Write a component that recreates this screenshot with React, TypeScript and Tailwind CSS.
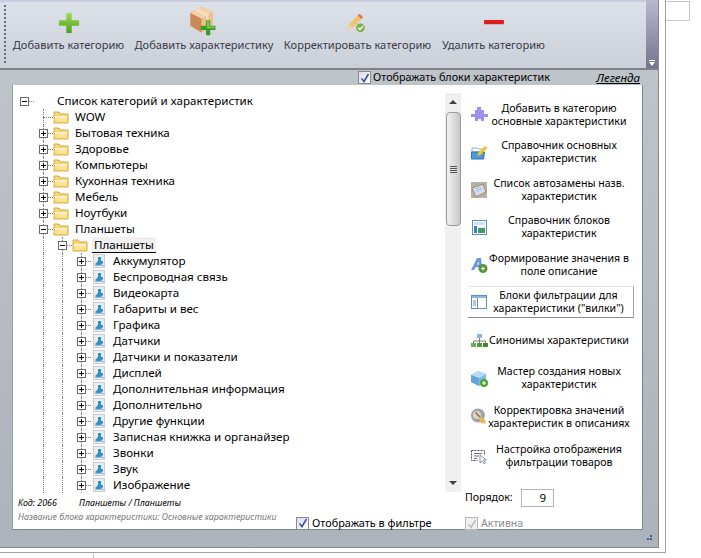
import type { ReactNode } from "react";

const PlusIcon = () => (
  <svg width="22" height="22" viewBox="0 0 24 24">
    <defs>
      <linearGradient id="plusG" x1="0" y1="0" x2="0" y2="1">
        <stop offset="0" stopColor="#9fdc5a" />
        <stop offset="1" stopColor="#4e9f1f" />
      </linearGradient>
    </defs>
    <path d="M9 1h6v8h8v6h-8v8H9v-8H1V9h8z" fill="url(#plusG)" />
  </svg>
);

const MinusIcon = () => (
  <svg width="20" height="7" viewBox="0 0 20 7">
    <rect x="0" y="1" width="20" height="4" rx="1" fill="#e21a1a" />
    <rect x="0" y="5" width="20" height="1" fill="#a8a8a8" opacity="0.6" />
  </svg>
);

const BoxIcon = () => (
  <svg width="29" height="31" viewBox="0 0 32 36">
    <path d="M2 9 15 2l13 6v15l-13 9-13-8z" fill="#e0a873" />
    <path d="M2 9l13 7v16L2 24z" fill="#c98a56" />
    <path d="M15 16l13-8v15l-13 9z" fill="#efc08f" />
    <path d="M2 9 15 2l13 6-13 8z" fill="#f3d2ab" />
    <path d="M7 6l13 7v4l3-2v-4L10 4z" fill="#fbe6c8" opacity="0.7" />
    <path d="M20 18h5v6h6v5h-6v6h-5v-6h-6v-5h6z" fill="#3f9a2b" />
    <path d="M21 19h3v6h6v2h-9z" fill="#79c94f" />
  </svg>
);

const PencilIcon = () => (
  <svg width="20" height="21" viewBox="0 0 22 24">
    <path d="M0 22 3 14 15 2l4 4L7 18z" fill="#efc36a" />
    <path d="M15 2l4 4-2 2-4-4z" fill="#e56c5c" />
    <path d="M0 22l3-8 4 4z" fill="#e9d7b0" />
    <circle cx="16" cy="18" r="5" fill="#7cb342" />
    <path d="M13.5 18l2 2 3.5-4" stroke="#fff" strokeWidth="1.4" fill="none" />
  </svg>
);

const Folder = () => (
  <svg width="16" height="14" viewBox="0 0 16 14" className="shrink-0">
    <path d="M1 2h5l1.5 2H15v9H1z" fill="#f6d675" stroke="#d8ab4a" />
    <rect x="2" y="6" width="12" height="2" fill="#fff3c4" />
    <rect x="2" y="8" width="12" height="4" fill="#fbe392" />
  </svg>
);

const Leaf = () => (
  <svg width="16" height="16" viewBox="0 0 16 16" className="shrink-0">
    <rect x="2" y="1" width="12" height="14" fill="#c9cdd0" />
    <rect x="3" y="2" width="10" height="12" fill="#e9ebec" />
    <path d="M7 4h3v4h2v2l-2 2H5l-1-1 3-3z" fill="#2f93c4" />
    <rect x="4" y="12" width="9" height="1" fill="#9fc0d4" />
  </svg>
);

const Expander = ({ open }: { open?: boolean }) => (
  <span className="relative flex h-[9px] w-[9px] items-center justify-center border border-[#6a6a6a] bg-white">
    <span className="absolute h-px w-[5px] bg-black" />
    {!open && <span className="absolute h-[5px] w-px bg-black" />}
  </span>
);

// один столбец отступа в дереве
const Guide = ({ kind }: { kind: "blank" | "line" | "plus" | "minus" | "corner" | "rootMinus" }) => (
  <span className="relative flex h-4 w-[19px] shrink-0 items-center justify-center">
    {kind !== "rootMinus" && kind !== "blank" && (
      <span className="absolute left-[9px] top-0 h-4 border-l border-dotted border-[#808080]" />
    )}
    {kind !== "line" && kind !== "blank" && (
      <span className="absolute left-[9px] top-[8px] w-[10px] border-t border-dotted border-[#808080]" />
    )}
    {(kind === "plus" || kind === "minus" || kind === "rootMinus") && (
      <Expander open={kind !== "plus"} />
    )}
  </span>
);

const top = [
  ["corner", "WOW"],
  ["plus", "Бытовая техника"],
  ["plus", "Здоровье"],
  ["plus", "Компьютеры"],
  ["plus", "Кухонная техника"],
  ["plus", "Мебель"],
  ["plus", "Ноутбуки"],
  ["minus", "Планшеты"],
] as const;

const leaves = [
  "Аккумулятор",
  "Беспроводная связь",
  "Видеокарта",
  "Габариты и вес",
  "Графика",
  "Датчики",
  "Датчики и показатели",
  "Дисплей",
  "Дополнительная информация",
  "Дополнительно",
  "Другие функции",
  "Записная книжка и органайзер",
  "Звонки",
  "Звук",
  "Изображение",
];

const Tree = () => (
  <div className="flex-1 pl-[2px] pt-2 text-[11.6px] leading-4 text-black">
    <div className="flex h-4 items-center">
      <Guide kind="rootMinus" />
      <span className="ml-[23px]">Список категорий и характеристик</span>
    </div>
    {top.map(([kind, label]) => (
      <div key={label} className="flex h-4 items-center">
        <Guide kind="blank" />
        <Guide kind={kind} />
        <Folder />
        <span className="ml-[6px]">{label}</span>
      </div>
    ))}
    <div className="flex h-4 items-center">
      <Guide kind="blank" />
      <Guide kind="line" />
      <Guide kind="minus" />
      <Folder />
      <span className="ml-[4px] border-b border-black bg-[#f0f0f0] px-[2px] leading-[15px]">Планшеты</span>
    </div>
    {leaves.map((label) => (
      <div key={label} className="flex h-4 items-center">
        <Guide kind="blank" />
        <Guide kind="line" />
        <Guide kind="line" />
        <Guide kind="plus" />
        <Leaf />
        <span className="ml-[6px]">{label}</span>
      </div>
    ))}
  </div>
);

const Scrollbar = () => (
  <div className="mt-2 flex h-[399px] w-4 shrink-0 flex-col items-center bg-[#f0f0f0]">
    <div className="mt-[7px] h-0 w-0 border-x-[4px] border-b-[4px] border-x-transparent border-b-[#404040]" />
    <div className="mt-[8px] flex h-[114px] w-[15px] flex-col items-center justify-center gap-px rounded-sm border border-[#9a9a9a] bg-gradient-to-r from-[#f2f2f2] to-[#c8c8c8]">
      <span className="h-px w-[7px] bg-[#555]" />
      <span className="h-px w-[7px] bg-[#555]" />
      <span className="h-px w-[7px] bg-[#555]" />
      <span className="h-px w-[7px] bg-[#555]" />
    </div>
    <div className="mt-auto mb-[7px] h-0 w-0 border-x-[4px] border-t-[4px] border-x-transparent border-t-[#404040]" />
  </div>
);

const icons: Record<string, ReactNode> = {
  puzzle: (
    <svg width="17" height="15" viewBox="0 0 17 15">
      <path d="M6 0h4v3h3v4h4v3h-4v4h-3v-2H7v2H4v-4H0V7h4V3h2z" fill="#9d90ee" />
    </svg>
  ),
  folder: (
    <svg width="17" height="15" viewBox="0 0 17 15">
      <path d="M1 3h5l1 1h5l-2 3H1z" fill="#fff" stroke="#7a9cc0" strokeWidth="0.8" />
      <path d="M0.5 7h13l-1 7H0.5z" fill="#4d9ad8" stroke="#2f72b0" />
      <path d="M7 8l7-7 2.5 2-7 7-3 1z" fill="#f0c52c" />
    </svg>
  ),
  list: (
    <svg width="16" height="16" viewBox="0 0 16 16">
      <rect width="16" height="16" fill="#b4b2ac" />
      <path d="M1 6l11-4 3 8-10 5z" fill="#cfe0f4" stroke="#b98d5c" strokeWidth="1.2" />
      <path d="M4 7l6-2M5 9l6-2" stroke="#a3bddb" />
    </svg>
  ),
  blocks: (
    <svg width="15" height="15" viewBox="0 0 15 15">
      <rect x="0.5" y="0.5" width="14" height="14" fill="#fff" stroke="#5f8fc0" />
      <rect x="2" y="2" width="11" height="3" fill="#cfe0f2" />
      <rect x="2" y="6" width="3" height="7" fill="#3f7fc0" />
      <rect x="6" y="6" width="7" height="2" fill="#e8f0f8" />
      <rect x="6" y="8" width="7" height="5" fill="#3f9a68" />
    </svg>
  ),
  letter: (
    <svg width="17" height="16" viewBox="0 0 17 16">
      <path d="M0 13 6 1h4l1 9-3 3-.3-3H5l-2 3z" fill="#7197d6" />
      <path d="M6 7.5h2l-.3-3z" fill="#fff" />
      <circle cx="12" cy="11.5" r="4.5" fill="#4f9a35" />
      <path d="M10 11.5h4M12 9.5v4" stroke="#fff" />
    </svg>
  ),
  filter: (
    <svg width="16" height="14" viewBox="0 0 16 14">
      <rect x="0.5" y="0.5" width="15" height="13" fill="#fff" stroke="#5f8fc0" />
      <rect x="1" y="1" width="14" height="2" fill="#8fb4de" />
      <path d="M6.5 3v10" stroke="#5f8fc0" />
      <path d="M2 6h3M2 8h3M2 10h3" stroke="#5f8fc0" />
    </svg>
  ),
  tree: (
    <svg width="17" height="13" viewBox="0 0 17 13">
      <rect x="6" y="0" width="5" height="4" fill="#8fb4e6" />
      <path d="M8.5 4v3M2.5 9V7h12v2M8.5 7v2" stroke="#7a7a7a" fill="none" />
      <rect x="0" y="9" width="5" height="4" fill="#6cb048" />
      <rect x="6" y="9" width="5" height="4" fill="#4f9a3c" />
      <rect x="12" y="9" width="5" height="4" fill="#3c8a30" />
    </svg>
  ),
  wizard: (
    <svg width="17" height="17" viewBox="0 0 17 17">
      <path d="M0 5l7-4 8 3v8l-7 4-8-4z" fill="#7fb8e6" />
      <path d="M0 5l8 3 7-4-8-3z" fill="#b9dcf5" />
      <path d="M8 8v8l-8-4V5z" fill="#67a3d6" />
      <circle cx="13" cy="13" r="4" fill="#4fa62f" />
      <path d="M11 13h4M13 11v4" stroke="#fff" />
    </svg>
  ),
  correct: (
    <svg width="17" height="17" viewBox="0 0 17 17">
      <circle cx="7" cy="7.5" r="7" fill="#a3a3a3" />
      <circle cx="6" cy="7" r="4" fill="#d4d4d4" />
      <path d="M5 4l5 5-1 1-5-5z" fill="#8a6a30" />
      <path d="M9 8l6 5-1 1 1 2-3-1-1 1-3-5z" fill="#e0bc4c" />
    </svg>
  ),
  settings: (
    <svg width="17" height="15" viewBox="0 0 17 15">
      <path d="M0.5 1.5h13v5M0.5 1.5v10h6" stroke="#3e4a68" strokeDasharray="2 1" fill="none" />
      <path d="M3 4.5h8M3 7h5M3 9.5h3" stroke="#6a7288" />
      <path d="M9 6v8l2-2 2 3 1.5-1-2-3h3z" fill="#fff" stroke="#6a7a95" strokeWidth="0.8" />
    </svg>
  ),
};

const actions = [
  { icon: "puzzle", lines: ["Добавить в категорию", "основные характеристики"], h: "h-[37px]" },
  { icon: "folder", lines: ["Справочник основных", "характеристик"], h: "h-[38px]" },
  { icon: "list", lines: ["Список автозамены назв.", "характеристик"], h: "h-[37px]" },
  { icon: "blocks", lines: ["Справочник блоков", "характеристик"], h: "h-[38px]" },
  { icon: "letter", lines: ["Формирование значения в", "поле описание"], h: "h-[37px]" },
  { icon: "filter", lines: ["Блоки фильтрации для", "характеристики (\"вилки\")"], h: "h-[38px]", active: true },
  { icon: "tree", lines: ["Синонимы характеристики"], h: "h-[38px]" },
  { icon: "wizard", lines: ["Мастер создания новых", "характеристик"], h: "h-[38px]" },
  { icon: "correct", lines: ["Корректировка значений", "характеристик в описаниях"], h: "h-[39px]" },
  { icon: "settings", lines: ["Настройка отображения", "фильтрации товаров"], h: "h-[40px]" },
];

const Action = ({ icon, lines, h, active }: { icon: string; lines: string[]; h: string; active?: boolean }) => (
  <div className={`flex items-center ${h}`}>
    <div
      className={`flex h-[32px] w-[166px] items-center pl-[2px] ${
        active ? "border-t border-r border-b border-t-[#e4e4e4] border-r-[#a0a0a0] border-b-[#8c8c8c]" : ""
      }`}
    >
      <span className="flex w-[18px] shrink-0 items-center justify-center">{icons[icon]}</span>
      <span className="flex-1 whitespace-nowrap pr-1 text-center text-[10.6px] leading-[13px] text-black">
        {lines.map((l) => (
          <span key={l} className="block">
            {l}
          </span>
        ))}
      </span>
    </div>
  </div>
);

const Check = ({ disabled }: { disabled?: boolean }) => (
  <span
    className={`flex h-[13px] w-[13px] shrink-0 items-center justify-center border ${
      disabled ? "border-[#b8b8b8] bg-[#f0f0f0]" : "border-[#8a8a8a] bg-gradient-to-br from-[#d8dcec] to-white"
    }`}
  >
    <svg width="10" height="10" viewBox="0 0 10 10">
      <path d="M1.5 5.5l2.5 3L8.5 1" stroke={disabled ? "#c0c0c0" : "#3a55a5"} strokeWidth="1.6" fill="none" />
    </svg>
  </span>
);

const ToolButton = ({ icon, label, iconTop }: { icon: ReactNode; label: string; iconTop: string }) => (
  <div className="flex flex-col items-center">
    <div className={`flex h-[34px] items-start justify-center ${iconTop}`}>{icon}</div>
    <span className="mt-[2px] whitespace-nowrap text-[11.1px] leading-[14px] text-[#3b3b4a]">{label}</span>
  </div>
);

export default function App() {
  return (
    <div className="relative flex h-[558px] w-[701px] flex-col overflow-hidden bg-white font-['Noto_Sans',sans-serif]">
      <div className="h-[553px] w-[666px] border-r border-b border-[#a0a0a0]">
        <div className="flex h-[548px] w-[659px] flex-col border-r border-b border-[#8a8a8a] bg-gradient-to-b from-[#c0c6ca] to-[#adb3ba]">
          <div className="flex h-[70px] shrink-0 border-b-2 border-[#7f8289]">
            <div className="flex flex-1 bg-gradient-to-b from-[#dde1e9] to-[#cbd0d8] border-t-2 border-t-[#c9cbdc]">
              <div className="ml-1 mt-[3px] h-[58px] w-[2px] border-l-2 border-dotted border-[#6a6a8a]" />
              <div className="ml-[6px] flex">
                <div className="w-[113px]">
                  <ToolButton iconTop="pt-[10px]" label="Добавить категорию" icon={<PlusIcon />} />
                </div>
                <div className="ml-[10px] w-[138px]">
                  <ToolButton iconTop="pt-[3px] pr-[4px]" label="Добавить характеристику" icon={<BoxIcon />} />
                </div>
                <div className="ml-[10px] w-[149px]">
                  <ToolButton iconTop="pt-[10px] pr-[3px]" label="Корректировать категорию" icon={<PencilIcon />} />
                </div>
                <div className="ml-[10px] w-[103px]">
                  <ToolButton iconTop="pt-[17px]" label="Удалить категорию" icon={<MinusIcon />} />
                </div>
              </div>
            </div>
            <div className="flex w-[12px] shrink-0 flex-col items-center justify-end bg-gradient-to-b from-[#b8b8d0] to-[#75758f] pb-[2px]">
              <span className="mb-px h-px w-[6px] bg-white" />
              <span className="h-0 w-0 border-x-[3px] border-t-[4px] border-x-transparent border-t-white" />
            </div>
          </div>

          <div className="flex h-[15px] shrink-0 items-center text-[10.8px] text-black">
            <div className="ml-[358px] flex items-center gap-[2px]">
              <Check />
              <span>Отображать блоки характеристик</span>
            </div>
            <span className="ml-auto mr-[18px] text-[11.5px] italic underline">Легенда</span>
          </div>

          <div className="ml-3 flex h-[445px] w-[631px] shrink-0 border-l border-r border-b border-l-[#9aa0a6] border-r-[#80868c] border-b-[#80868c] bg-white">
            <div className="flex w-[448px] shrink-0 flex-col">
              <div className="flex h-[409px] shrink-0">
                <Tree />
                <Scrollbar />
              </div>
              <div className="flex flex-1 text-[8.85px] italic">
                <div className="ml-[5px] mt-[2px] w-[278px]">
                  <div className="flex leading-[14px] text-black">
                    <span className="w-[61px]">Код: 2066</span>
                    <span>Планшеты / Планшеты</span>
                  </div>
                  <div className="whitespace-nowrap leading-[14px] text-[#7a7a7a]">
                    Название блока характеристики: Основные характеристики
                  </div>
                </div>
                <div className="mt-[22px] flex h-[14px] items-center gap-[3px] text-[10.9px] not-italic">
                  <Check />
                  <span className="whitespace-nowrap">Отображать в фильтре</span>
                </div>
              </div>
            </div>
            <div className="flex flex-1 flex-col">
              <div className="mt-[11px] ml-[7px]">
                {actions.map((a) => (
                  <Action key={a.icon} {...a} />
                ))}
              </div>
              <div className="mt-[13px] ml-[4px] flex items-center text-[10.6px]">
                <span className="w-[56px]">Порядок:</span>
                <span className="flex h-[18px] w-[33px] items-center justify-end border border-[#b4b4b4] pr-[7px] text-[11.5px]">9</span>
              </div>
              <div className="mt-[9px] ml-[4px] flex items-center gap-[3px] text-[10.6px] text-[#8a8a8a]">
                <Check disabled />
                <span>Активна</span>
              </div>
            </div>
          </div>
          <div className="mt-auto mb-[5px] mr-[5px] flex justify-end">
            <svg width="8" height="8" viewBox="0 0 8 8">
              <path d="M5 1h2v2H5zM2 4h2v2H2zM5 4h2v2H5z" fill="#2f5f9a" />
            </svg>
          </div>
        </div>
      </div>
      <div className="absolute left-[666px] top-[1px] h-5 w-6 border border-l-0 border-[#c8c8c8]" />
      <div className="ml-[93px] h-[5px] w-[1px] bg-[#c8c8c8]" />
    </div>
  );
}
